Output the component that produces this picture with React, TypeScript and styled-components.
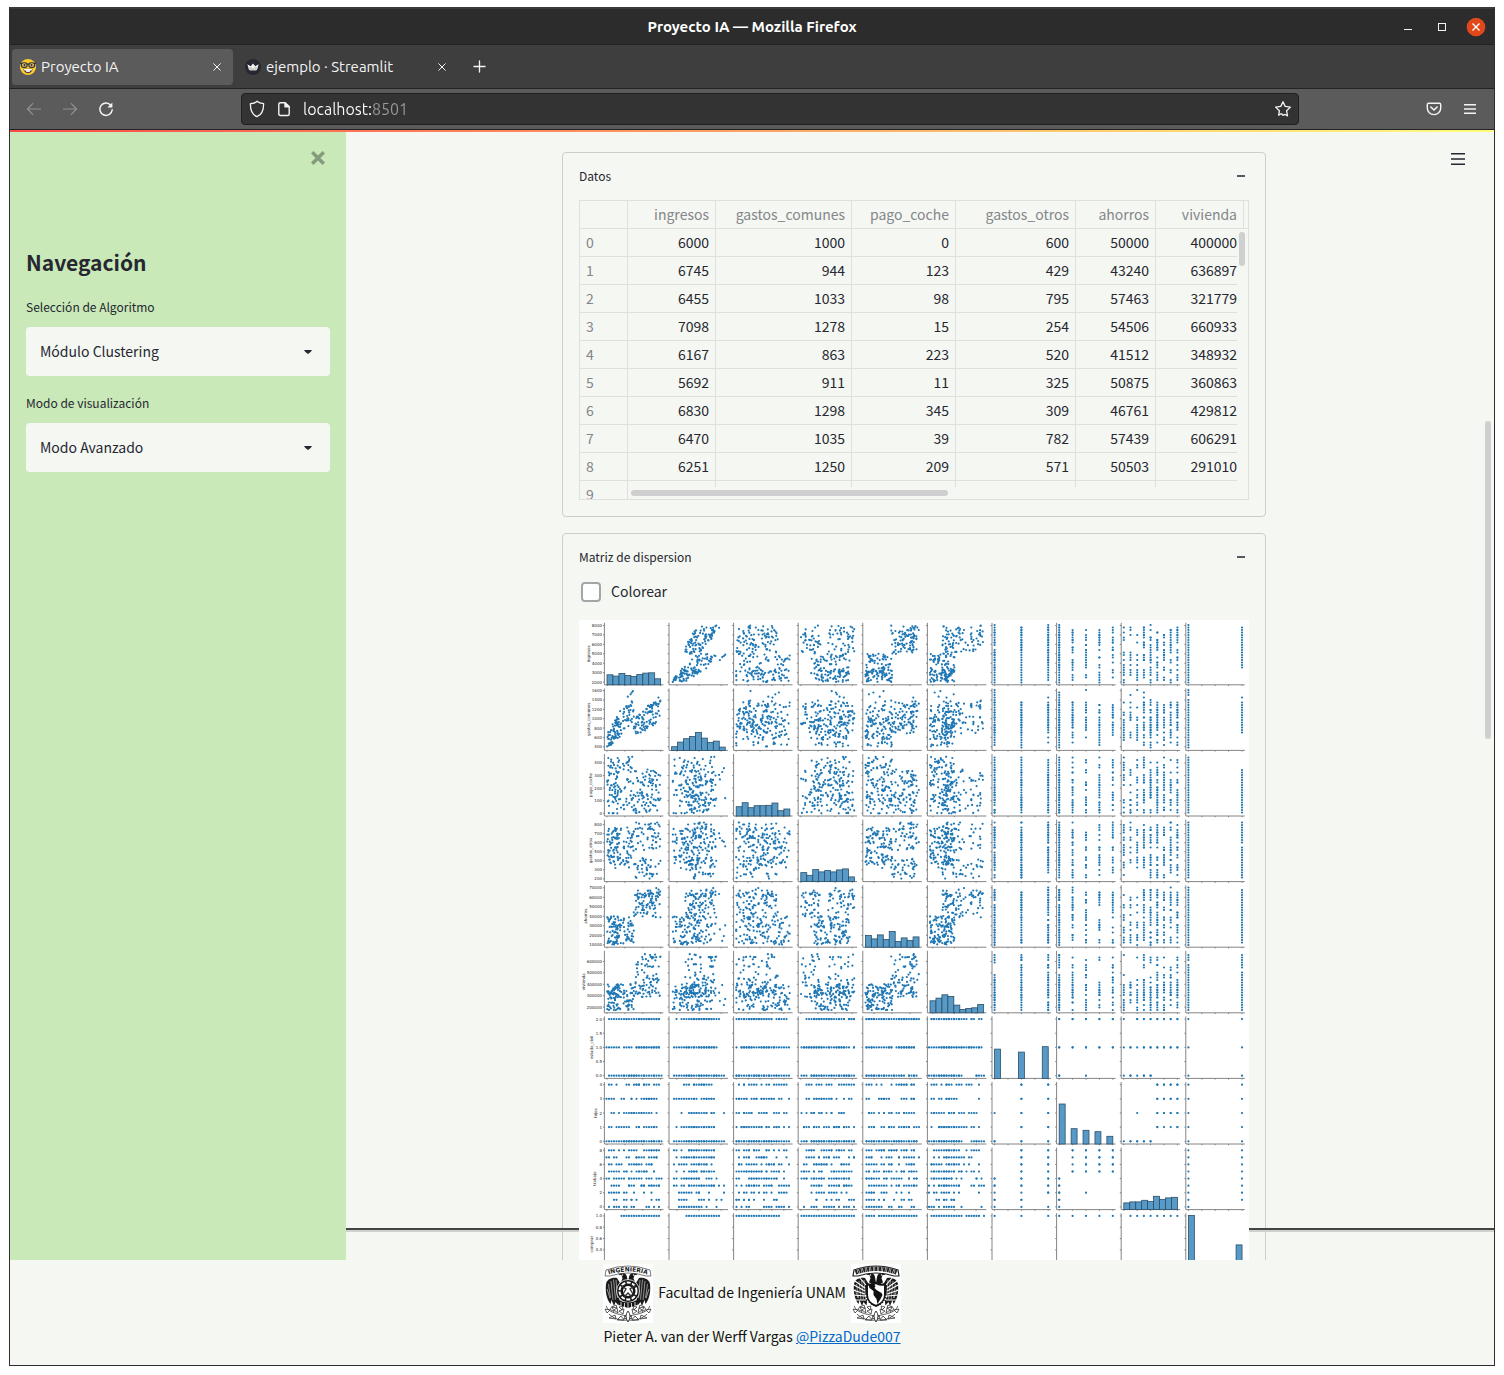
import React, { useMemo, useState } from "react";
import styled, { createGlobalStyle, css } from "styled-components";

const pageFont = `"Source Sans Pro", "Noto Sans CJK JP", "Noto Sans", sans-serif`;
const chromeFont = `Ubuntu, "Noto Sans", sans-serif`;
const ink = "#262730";
const paper = "#f5f7f2";
const line = "#dde0dc";

const GlobalStyle = createGlobalStyle`
  *, *::before, *::after { box-sizing: border-box; }
  body { margin: 0; background: #fff; font-family: ${pageFont}; color: ${ink}; }
  button, input, select { font: inherit; color: inherit; margin: 0; }
  button { padding: 0; border: 0; background: none; cursor: pointer; }
  svg { display: block; flex: none; }
`;

/* ---------- window ---------- */

const Desktop = styled.div`
  display: flex;
  height: 100vh;
  padding: 7px 9px 9px;
`;

const Window = styled.div`
  display: flex;
  flex-direction: column;
  flex: 1;
  min-width: 0;
  border: 1px solid #2d2d2d;
  border-top: 2px solid #3a3a3a;
  background: ${paper};
`;

const TitleBar = styled.header`
  display: grid;
  grid-template-columns: 1fr auto 1fr;
  align-items: center;
  height: 36px;
  flex: none;
  padding: 0 8px;
  background: #2c2c2c;
  border-bottom: 1px solid #232323;
  font-family: ${chromeFont};
`;

const WindowTitle = styled.h1`
  grid-column: 2;
  margin: 0;
  font-size: 15px;
  line-height: 20px;
  font-weight: 700;
  color: #fff;
`;

const WindowControls = styled.div`
  display: flex;
  justify-content: flex-end;
  gap: 14px;
`;

const IconButton = styled.button<{ $size: number; $color?: string }>`
  display: grid;
  place-items: center;
  width: ${(p) => p.$size}px;
  height: ${(p) => p.$size}px;
  flex: none;
  color: ${(p) => p.$color ?? "#f4f4f4"};
`;

const TabStrip = styled.nav`
  display: flex;
  align-items: center;
  gap: 4px;
  height: 44px;
  flex: none;
  padding: 0 2px;
  background: #3e3e3e;
  border-bottom: 1px solid #232323;
  font-family: ${chromeFont};
`;

const Tab = styled.div<{ $active?: boolean }>`
  display: flex;
  align-items: center;
  width: 221px;
  height: 36px;
  padding: 0 8px;
  border-radius: 4px;
  background: ${(p) => (p.$active ? "#5b5b5b" : "transparent")};
`;

const TabLabel = styled.button`
  display: flex;
  align-items: center;
  gap: 5px;
  flex: 1;
  text-align: left;
  font-size: 15px;
  line-height: 20px;
  color: #f4f4f4;
`;

const ToolBar = styled.div`
  display: flex;
  align-items: center;
  height: 41px;
  flex: none;
  padding: 0 16px;
  background: #5b5b5b;
  border-bottom: 1px solid #232323;
  font-family: ${chromeFont};
`;

const ToolGroup = styled.div<{ $end?: boolean }>`
  display: flex;
  gap: 20px;
  width: ${(p) => (p.$end ? "179px" : "215px")};
  flex: none;
  justify-content: ${(p) => (p.$end ? "flex-end" : "flex-start")};
`;

const AddressBar = styled.form`
  display: flex;
  align-items: center;
  gap: 13px;
  flex: 1;
  height: 32px;
  padding: 0 6px 0 7px;
  border: 1px solid #202020;
  border-radius: 4px;
  background: #333;
  color: #f4f4f4;
`;

const AddressInput = styled.input`
  flex: 1;
  min-width: 0;
  padding: 0;
  border: 0;
  outline: 0;
  font-size: 16px;
  line-height: 24px;
  color: #fff;
  -webkit-text-fill-color: transparent;
  background: linear-gradient(90deg, #fff 69px, #9a9a9a 69px);
  -webkit-background-clip: text;
  background-clip: text;
`;

/* ---------- app ---------- */

const Decoration = styled.div`
  height: 2px;
  flex: none;
  background: linear-gradient(90deg, #ff4b4b, #fffd80);
`;

const Body = styled.div`
  display: flex;
  flex: 1;
  min-height: 0;
`;

const Sidebar = styled.aside`
  display: flex;
  flex-direction: column;
  width: 336px;
  flex: none;
  padding: 14px 16px;
  background: #c9e9b8;
`;

const SidebarTop = styled.div`
  display: flex;
  justify-content: flex-end;
  height: 98px;
`;

const SidebarTitle = styled.h2`
  margin: 0 0 16px;
  font-size: 21px;
  line-height: 36px;
  font-weight: 700;
`;

const Field = styled.div`
  display: flex;
  flex-direction: column;
  gap: 9px;
  margin-bottom: 16px;
`;

const FieldLabel = styled.label`
  font-size: 12px;
  line-height: 22px;
`;

const SelectBox = styled.div`
  display: grid;
  align-items: center;
  & > * { grid-area: 1 / 1; }
  & > svg { justify-self: end; margin-right: 18px; pointer-events: none; }
`;

const Select = styled.select`
  appearance: none;
  width: 100%;
  height: 49px;
  padding: 0 40px 2px 14px;
  border: 0;
  border-radius: 4px;
  background: ${paper};
  font-size: 14px;
`;

const Main = styled.main`
  position: relative;
  display: flex;
  flex: 1;
  min-width: 0;
  overflow: hidden;
  padding: 20px 12px 0 0;
`;

const FloatingMenu = styled.div`
  position: absolute;
  top: 16px;
  right: 25px;
`;

const FooterRule = styled.div`
  position: absolute;
  left: 0;
  right: 0;
  bottom: 28px;
  height: 4px;
  background: #cfd1cd;
  border-top: 2px solid #444;
`;

const PageThumb = styled.div`
  position: absolute;
  top: 289px;
  right: 3px;
  width: 6px;
  height: 318px;
  border-radius: 3px;
  background: #cfcfcf;
`;

const Column = styled.div`
  display: flex;
  flex-direction: column;
  gap: 16px;
  width: 100%;
  max-width: 704px;
  margin: 0 auto;
`;

const Card = styled.section`
  flex: none;
  padding: 0 16px 16px;
  border: 1px solid #cbcecb;
  border-radius: 4px;
`;

const CardHeader = styled.button`
  display: flex;
  align-items: center;
  justify-content: space-between;
  width: 100%;
  height: 47px;
  padding: 0 4px 2px 0;
  font-size: 12px;
  line-height: 20px;
`;

const Dash = styled.span`
  width: 8px;
  height: 2px;
  background: #555860;
`;

const Grid = styled.div`
  position: relative;
  height: 300px;
  overflow: hidden;
  border: 1px solid ${line};
`;

const Table = styled.table`
  width: 100%;
  table-layout: fixed;
  border-collapse: separate;
  border-spacing: 0;
  font-size: 14px;
  line-height: 20px;
`;

const cell = css`
  height: 28px;
  padding: 0 6px 2px;
  border: solid ${line};
  border-width: 0 1px 1px 0;
  text-align: right;
  font-weight: 400;
  white-space: nowrap;
`;

const HeadCell = styled.th<{ $last?: boolean }>`
  ${cell}
  color: #83868a;
  ${(p) => p.$last && "padding: 0; border-right: 0;"}
`;

const IndexCell = styled.th`
  ${cell}
  text-align: left;
  color: #83868a;
`;

const DataCell = styled.td<{ $last?: boolean }>`
  ${cell}
  ${(p) => p.$last && "padding-right: 0; border-right: 0;"}
`;

const StubCell = styled.td<{ $last?: boolean }>`
  ${(p) => !p.$last && `background: linear-gradient(${line}, ${line}) right top / 1px 6px no-repeat;`}
`;

const GridThumb = styled.div<{ $vertical?: boolean }>`
  position: absolute;
  border-radius: 3px;
  background: #cfcfcf;
  ${(p) =>
    p.$vertical
      ? "top: 31px; right: 3px; width: 6px; height: 34px;"
      : "bottom: 3px; left: 51px; width: 317px; height: 6px;"}
`;

const CheckLabel = styled.label`
  display: flex;
  align-items: center;
  gap: 10px;
  height: 22px;
  margin-bottom: 17px;
  padding-left: 2px;
  font-size: 14px;
  line-height: 20px;
`;

const CheckText = styled.span`
  padding-bottom: 2px;
`;

const Check = styled.input`
  appearance: none;
  width: 20px;
  height: 20px;
  border: 2px solid #a3a6a6;
  border-radius: 4px;
  background: #fff;
  &:checked { background: #1f77b4; }
`;

const Figure = styled.figure`
  position: relative;
  margin: 0;
  background: #fff;
`;

const Footer = styled.footer`
  display: flex;
  flex-direction: column;
  align-items: center;
  gap: 1px;
  flex: none;
  padding: 4px 0 17px;
  font-size: 14px;
  line-height: 24px;
  color: #111;
`;

const FooterLine = styled.div`
  display: flex;
  align-items: center;
  gap: 5px;
`;

const FooterText = styled.span`
  padding-bottom: 3px;
`;

const Link = styled.a`
  color: #0068c9;
`;

/* ---------- data table ---------- */

const columns = ["ingresos", "gastos_comunes", "pago_coche", "gastos_otros", "ahorros", "vivienda"];
const colWidths = [48, 88, 136, 104, 120, 80, 81, 7];
const rows = [
  [6000, 1000, 0, 600, 50000, 400000],
  [6745, 944, 123, 429, 43240, 636897],
  [6455, 1033, 98, 795, 57463, 321779],
  [7098, 1278, 15, 254, 54506, 660933],
  [6167, 863, 223, 520, 41512, 348932],
  [5692, 911, 11, 325, 50875, 360863],
  [6830, 1298, 345, 309, 46761, 429812],
  [6470, 1035, 39, 782, 57439, 606291],
  [6251, 1250, 209, 571, 50503, 291010],
];

function DataTable() {
  return (
    <Grid>
      <Table>
        <colgroup>
          {colWidths.map((w, i) => <col key={i} style={{ width: w }} />)}
          <col />
        </colgroup>
        <thead>
          <tr>
            <HeadCell />
            {columns.map((c, i) => <HeadCell key={c} scope="col" colSpan={i === 5 ? 2 : 1}>{c}</HeadCell>)}
            <HeadCell $last />
          </tr>
        </thead>
        <tbody>
          {rows.map((r, i) => (
            <tr key={i}>
              <IndexCell scope="row">{i}</IndexCell>
              {r.map((v, j) => <DataCell key={j} $last={j === 5}>{v}</DataCell>)}
            </tr>
          ))}
          <tr>
            <IndexCell scope="row">9</IndexCell>
            {columns.map((c, j) => <StubCell key={c} $last={j === 5} />)}
          </tr>
        </tbody>
      </Table>
      <GridThumb $vertical />
      <GridThumb />
    </Grid>
  );
}

/* ---------- pair plot ---------- */

type Axis = { name: string; min: number; max: number; ticks: number[]; xTicks: number[]; labelX: number; digits?: number };

const steps = (a: number, b: number, s: number) => {
  const out: number[] = [];
  for (let v = a; v <= b + s / 100; v += s) out.push(v);
  return out;
};

const axes: Axis[] = [
  { name: "ingresos", min: 2000, max: 8000, ticks: steps(2000, 8000, 1000), xTicks: steps(2000, 8000, 2000), labelX: 10 },
  { name: "gastos_comunes", min: 380, max: 1590, ticks: steps(400, 1600, 200), xTicks: [500, 1000, 1500], labelX: 10 },
  { name: "pago_coche", min: 0, max: 450, ticks: steps(0, 400, 100), xTicks: steps(0, 400, 100), labelX: 12 },
  { name: "gastos_otros", min: 200, max: 825, ticks: steps(200, 800, 100), xTicks: steps(200, 800, 200), labelX: 12 },
  { name: "ahorros", min: 10400, max: 69900, ticks: steps(10000, 70000, 10000), xTicks: steps(20000, 60000, 20000), labelX: 7 },
  { name: "vivienda", min: 174000, max: 670000, ticks: steps(200000, 600000, 100000), xTicks: steps(200000, 600000, 200000), labelX: 5 },
  { name: "estado_civil", min: 0, max: 2, ticks: steps(0, 2, 0.5), xTicks: steps(0, 2, 0.5), labelX: 13, digits: 1 },
  { name: "hijos", min: 0, max: 4, ticks: steps(0, 4, 1), xTicks: steps(0, 4, 1), labelX: 17 },
  { name: "trabajo", min: 0, max: 8, ticks: steps(0, 8, 2), xTicks: steps(0, 8, 2), labelX: 16 },
  { name: "comprar", min: 0, max: 1, ticks: steps(0.2, 1, 0.2), xTicks: steps(0, 1, 0.25), labelX: 13, digits: 1 },
];

/* bar heights of the diagonal histograms; zeros are empty bins */
const bars: number[][] = [
  [10, 8.7, 11.3, 9.3, 8.3, 10.3, 11.7, 12, 6],
  [3.7, 8.3, 11.7, 14, 18, 12.3, 8, 9.3, 3.3],
  [9.3, 13.3, 8.3, 10.3, 10.3, 10.7, 13, 5.3, 7],
  [9, 6.3, 12, 9.7, 11, 9.7, 11.7, 12.7, 4.7],
  [11.7, 8.3, 12.3, 7.7, 15.7, 5.7, 9.3, 6.7, 10.3],
  [12, 14.7, 18, 16.3, 7.7, 3.3, 4.3, 5, 8.3],
  [29.3, 0, 0, 0, 26.3, 0, 0, 0, 31.7],
  [40, 0, 15.3, 0, 13.7, 0, 12.3, 0, 7.7],
  [6.7, 7.7, 7.7, 9.3, 8, 13.3, 10, 11.7, 12.3],
  [59.7, 0, 0, 0, 0, 0, 0, 0, 30.3],
];

function makeSamples(): number[][] {
  let seed = 20211;
  const rnd = () => {
    seed = (seed * 1664525 + 1013904223) % 4294967296;
    return seed / 4294967296;
  };
  const between = (a: number, b: number) => a + (b - a) * rnd();
  const out: number[][] = [
    [4900, 1590, 120, 560, 30500, 270000, 0, 2, 2, 0],
    [7950, 1370, 300, 640, 66000, 640000, 2, 0, 4, 0],
    [3200, 900, 440, 700, 22000, 380000, 1, 0, 0, 0],
  ];
  for (let i = 0; i < 200; i++) {
    const low = rnd() < 0.5;
    const income = low ? between(2000, 5000) : between(5000, 8000);
    const common = Math.min(1560, Math.max(380, low ? income * between(0.18, 0.34) : income * between(0.12, 0.195)));
    const car = low ? between(0, 450) : between(0, 350);
    const other = low ? between(320, 770) : rnd() < 0.45 ? between(200, 430) : between(500, 825);
    const savings = low ? between(10400, 40000) : between(38000, 69900);
    const home = low ? between(174000, 405000) : rnd() < 0.6 ? between(280000, 460000) : between(460000, 670000);
    const job = Math.floor(Math.pow(rnd(), 0.85) * 9);
    const kids = job < 5 ? (job === 2 && rnd() < 0.1 ? 2 : 0) : 1 + Math.floor(Math.pow(rnd(), 1.3) * 4);
    const civil = job < 5 ? (rnd() < 0.65 ? 0 : 1 + Math.floor(rnd() * 2)) : rnd() < 0.42 ? 1 : 2;
    const buys = income > 3500 && car < 350 && job > 0 && rnd() < 0.55 ? 1 : 0;
    out.push([income, common, car, other, savings, home, civil, kids, job, buys]);
  }
  return out;
}

const PITCH_X = 64.6;
const PITCH_Y = 65.6;
const left = (c: number) => 25.4 + PITCH_X * c;
const bottom = (r: number) => 64.8 + PITCH_Y * r;
const px = (c: number, v: number) => left(c) + 2.6 + (53.6 * (v - axes[c].min)) / (axes[c].max - axes[c].min);
const py = (r: number, v: number) => bottom(r) - 2.7 - (56.6 * (v - axes[r].min)) / (axes[r].max - axes[r].min);
const DOT_STEP = 2.5;

function PairPlot({ colored }: { colored: boolean }) {
  const samples = useMemo(makeSamples, []);
  const panels = useMemo(() => {
    const list: { key: string; d: [string, string] }[] = [];
    axes.forEach((_, r) =>
      axes.forEach((__, c) => {
        if (r === c) return;
        const d: [string, string] = ["", ""];
        samples.forEach((s) => {
          let x = px(c, s[c]);
          let y = py(r, s[r]);
          if (c > 5 && r < 6) y = Math.round(y / DOT_STEP) * DOT_STEP;
          if (r > 5 && c < 6) x = Math.round(x / DOT_STEP) * DOT_STEP;
          d[s[9]] += `M${x.toFixed(1)} ${y.toFixed(1)}h.01`;
        });
        list.push({ key: `${r}-${c}`, d });
      })
    );
    return list;
  }, [samples]);

  return (
    <svg viewBox="0 0 670 670" width="100%" role="img" aria-label="Matriz de dispersion">
      <g stroke="#777" strokeWidth="0.9" fill="none">
        {axes.map((_, r) =>
          axes.map((a, c) => (
            <path
              key={`${r}-${c}`}
              d={
                `M${left(c)} ${bottom(r) - 62}V${bottom(r)}H${left(c) + 59}` +
                axes[r].ticks.map((t) => `M${left(c)} ${py(r, t)}h-1.4`).join("") +
                a.xTicks.map((t) => `M${px(c, t)} ${bottom(r)}v1.2`).join("")
              }
            />
          ))
        )}
      </g>
      <g strokeWidth="2.2" strokeLinecap="round" fill="none">
        {panels.map((p) => (
          <React.Fragment key={p.key}>
            <path d={p.d[0]} stroke="#1f77b4" />
            <path d={p.d[1]} stroke={colored ? "#ff7f0e" : "#1f77b4"} />
          </React.Fragment>
        ))}
      </g>
      <g fill="#579ac7" stroke="#2b4f68" strokeWidth="0.8">
        {bars.map((hs, i) =>
          hs.map((h, k) =>
            h > 0 ? <rect key={`${i}-${k}`} x={left(i) + 2.6 + k * 5.96} y={bottom(i) - h} width="5.96" height={h} /> : null
          )
        )}
      </g>
      <g fill="#222" fontFamily="DejaVu Sans, sans-serif" fontSize="4">
        {axes.map((a, r) => (
          <React.Fragment key={a.name}>
            {a.ticks.map((t) => (
              <text key={t} x="23" y={py(r, t) + 1.5} textAnchor="end">{t.toFixed(a.digits ?? 0)}</text>
            ))}
            <text transform={`translate(${a.labelX + 1} ${bottom(r) - 31}) rotate(-90)`} textAnchor="middle">{a.name}</text>
          </React.Fragment>
        ))}
      </g>
    </svg>
  );
}

/* ---------- icons ---------- */

const stroke = { fill: "none", stroke: "currentColor", strokeLinecap: "round", strokeLinejoin: "round" } as const;

const CloseIcon = ({ size = 8, width = 1.2, cap = "round" }: { size?: number; width?: number; cap?: "round" | "butt" }) => (
  <svg width={size} height={size} viewBox="0 0 8 8" {...stroke} strokeLinecap={cap} strokeWidth={width}><path d="M.7.7l6.600 6.600M7.300.7L.7 7.300" /></svg>
);

const MenuIcon = ({ width, height, weight }: { width: number; height: number; weight: number }) => (
  <svg width={width} height={height} fill="currentColor">
    {[0, (height - weight) / 2, height - weight].map((y) => <rect key={y} y={y} width={width} height={weight} />)}
  </svg>
);

const NerdIcon = () => (
  <svg width="16" height="16" viewBox="0 0 16 16">
    <circle cx="8" cy="8" r="8" fill="#fcc92f" />
    <path d="M3.4 9.8h9.2c-.3 2.8-2.2 4.5-4.6 4.5s-4.300-1.700-4.600-4.500z" fill="#5d4037" />
    <path d="M4 10h8l-.4 1.400H4.400z" fill="#fff" />
    <path d="M6.300 11h1.600v2H6.300zM8.100 11h1.600v2H8.100z" fill="#fff" />
    <g fill="#d9c27c" stroke="#2d2f33" strokeWidth="1.100">
      <rect x="1.400" y="3.700" width="5.700" height="4.700" rx="2.200" />
      <rect x="8.900" y="3.700" width="5.700" height="4.700" rx="2.200" />
    </g>
    <path d="M0 4.400h1.800M14.200 4.400H16M6.900 5.200q1.100-.8 2.200 0" stroke="#2d2f33" strokeWidth="1.200" fill="none" />
    <circle cx="4.500" cy="6.100" r="1" fill="#3b2a20" />
    <circle cx="11.500" cy="6.100" r="1" fill="#3b2a20" />
  </svg>
);

const CrownIcon = () => (
  <svg width="16" height="16" viewBox="0 0 16 16">
    <circle cx="8" cy="8" r="8" fill="#262730" />
    <path d="M2.300 5.200l3.400 2L8 4.400l2.300 2.800 3.400-2-1.700 5.300q-.2.700-1 .7H5q-.8 0-1-.7z" fill="#f4f4f4" />
    <path d="M3.500 9l2.200-1.800L8 9.200l2.300-2L12.500 9l-.5 1.500q-.2.700-1 .7H5q-.8 0-1-.7z" fill="#cfcfcf" />
  </svg>
);

const ArrowIcon = ({ flip }: { flip?: boolean }) => (
  <svg width="16" height="16" viewBox="0 0 16 16" {...stroke} strokeWidth="1.200">
    <path d={flip ? "M1.500 8h13M9.300 2.700L14.500 8l-5.200 5.300" : "M14.500 8h-13M6.700 2.700L1.500 8l5.200 5.300"} />
  </svg>
);

const ReloadIcon = () => (
  <svg width="16" height="16" viewBox="0 0 16 16" {...stroke} strokeWidth="1.500">
    <path d="M12.800 4.300A6.200 6.200 0 1 0 14.200 8.800" />
    <path d="M14.400 1.600v5H9.400z" fill="currentColor" stroke="none" />
  </svg>
);

const ShieldIcon = () => (
  <svg width="16" height="18" viewBox="0 0 16 18" {...stroke} strokeWidth="1.300">
    <path d="M8 1.300C6.400 2.900 4 3.600 1.400 3.700 1.300 9.700 3.300 14.700 8 16.700c4.700-2 6.700-7 6.600-13C12 3.600 9.600 2.900 8 1.300z" />
  </svg>
);

const PageIcon = () => (
  <svg width="12" height="16" viewBox="0 0 12 16" {...stroke} strokeWidth="1.400">
    <path d="M2.300 1.700h4.900L11.200 5.700v7.300q0 1.500-1.500 1.500H2.300q-1.500 0-1.500-1.500V3.200q0-1.500 1.500-1.500z" />
    <path d="M7 1.700v4h4.200z" fill="currentColor" />
  </svg>
);

const StarIcon = () => (
  <svg width="18" height="18" viewBox="0 0 18 18" {...stroke} strokeWidth="1.300">
    <path d="M9 1.700l2.200 4.700 5.200.7-3.800 3.600.9 5.200-2.300-1.400q-.5-.2-.8.200L9 15.300l-1.200-1.300q-.4-.4-.8-.2l-2.300 1.400.7-4.500L1.600 7.100l5.200-.7z" />
  </svg>
);

const PocketIcon = () => (
  <svg width="16" height="14" viewBox="0 0 16 14" {...stroke} strokeWidth="1.400">
    <path d="M2.600 1.300h10.800q1.300 0 1.300 1.300v3.700a6.700 6.300 0 0 1-13.400 0V2.600q0-1.300 1.300-1.300z" />
    <path d="M4.900 5L8 8l3.100-3" strokeWidth="1.600" />
  </svg>
);

const Caret = () => (
  <svg width="8" height="4" viewBox="0 0 8 4"><path d="M0 0h8q-1 2.200-4 4-3-1.800-4-4z" fill={ink} /></svg>
);

const BirdSide = () => (
  <g>
    <path d="M24 13c-1-4-4-5-7-3.800l-1.500 1.600 3 .2 1 3.300-1.500 4L22 21l3-2z" fill="#161616" />
    <circle cx="19.500" cy="11" r=".7" fill="#fff" />
    <path d="M14 14C9 13 4 15 3 20c-.8 7 .3 15 4.500 20l1-4 2.500 6 1.500-4 3 3.500 3-20z" fill="#1d1d1d" />
    <path d="M5.500 20l2 14M8 17l2 19M10.500 15.500l2 20M13 16l1.500 18M4 25l3 9" stroke="#ddd" strokeWidth=".6" fill="none" />
    <path d="M25 54c-4-4-9-3-13-5-4-1-7-3-9-7M24 56c-6 1-13-1-18-6M7 46l-5-1 2 4zM11 47.500l-2-5-2 3zM15 49l-1-5-3 2zM12 51l-6 3 7 1zM18 52l-4 4 7 0zM20 50l1-5-5 2zM9 43l4-2 1 3zM22 51l-1 4 3-1zM16 43l4-1-1 4z" fill="#fff" stroke="#333" strokeWidth=".8" />
  </g>
);

function Crest({ kind }: { kind: "ingenieria" | "unam" }) {
  const unam = kind === "unam";
  return (
    <svg width="50" height="59" viewBox="0 0 50 59" role="img" aria-label={unam ? "UNAM" : "Ingeniería"}>
      <rect width="50" height="59" fill="#fff" />
      <BirdSide />
      <g transform="matrix(-1 0 0 1 50 0)"><BirdSide /></g>
      {unam ? (
        <g>
          <path d="M1 15l13 9M1 20l13 7M2 26l12 4M2 31l12 1M49 15l-13 9M49 20l-13 7M48 26l-12 4M48 31l-12 1M4 36l11 0M46 36l-11 0M8 13l7 8M42 13l-7 8" stroke="#fff" strokeWidth="1.100" />
          <path d="M16 20q5 2 9-1 4 3 9 1v11q0 8-9 11-9-3-9-11z" fill="#fff" stroke="#161616" strokeWidth="2" />
          <path d="M14.500 31q1 9 10.500 13 9.500-4 10.500-13" fill="none" stroke="#fff" strokeWidth="1.500" strokeDasharray="1.500 1.500" />
          <path d="M17.500 20.500l5-.5 2 2-1 2 2 2 5 3 1 2-2 4-3 5-1-5-3-4 0-4-4-3z" fill="#111" />
        </g>
      ) : (
        <g>
          <circle cx="25" cy="27" r="11.500" fill="#161616" stroke="#fff" strokeWidth=".8" />
          <circle cx="25" cy="27" r="8.500" fill="none" stroke="#fff" strokeWidth="2" strokeDasharray="4 1.500" />
          <circle cx="25" cy="27" r="5" fill="#fff" />
          <path d="M17 21l6 4-3 5M33 21l-6 4 3 5M21 33l4-4 4 4" stroke="#333" strokeWidth="1.400" fill="none" />
          <path d="M14 35q11 7 22 0l-2 6-9 3-9-3z" fill="#161616" />
          <path d="M18 38v4M21.500 39v4M25 39v5M28.500 39v4M32 38v4" stroke="#fff" strokeWidth=".8" />
        </g>
      )}
      <path d="M3 6Q25-2 47 6l1 6-5 0Q25 6 7 12l-5 0z" fill="#fff" stroke="#222" strokeWidth={unam ? 1.2 : 0.6} />
      {unam ? (
        <path d="M4.500 8.500Q25 1 45.500 8.500" stroke="#222" strokeWidth="4.500" strokeDasharray="2 .5 1 .5" fill="none" />
      ) : (
        <>
          <path id="crest-arc" d="M3 11.500Q25 3.500 47 11.500" fill="none" />
          <text fontFamily="DejaVu Sans, sans-serif" fontSize="6" fontWeight="700" fill="#222">
            <textPath href="#crest-arc" startOffset="50%" textAnchor="middle">INGENIERIA</textPath>
          </text>
        </>
      )}
      <path d="M25 47q-4 5 0 11 4-6 0-11z" fill="#fff" stroke="#222" strokeWidth=".9" />
    </svg>
  );
}

/* ---------- page ---------- */

function SidebarSelect({ id, label, options }: { id: string; label: string; options: string[] }) {
  return (
    <Field>
      <FieldLabel htmlFor={id}>{label}</FieldLabel>
      <SelectBox>
        <Select id={id}>{options.map((o) => <option key={o}>{o}</option>)}</Select>
        <Caret />
      </SelectBox>
    </Field>
  );
}

function Expander({ title, children }: { title: string; children: React.ReactNode }) {
  const [open, setOpen] = useState(true);
  return (
    <Card>
      <CardHeader aria-expanded={open} onClick={() => setOpen(!open)}>
        {title}
        <Dash />
      </CardHeader>
      {open && children}
    </Card>
  );
}

export default function App() {
  const [colored, setColored] = useState(false);
  return (
    <Desktop>
      <GlobalStyle />
      <Window>
        <TitleBar>
          <WindowTitle>Proyecto IA — Mozilla Firefox</WindowTitle>
          <WindowControls>
            <IconButton $size={20} aria-label="Minimizar">
              <svg width="8" height="8"><path d="M0 6.500h8" stroke="currentColor" /></svg>
            </IconButton>
            <IconButton $size={20} aria-label="Maximizar">
              <svg width="8" height="8"><rect x=".5" y=".5" width="7" height="7" fill="none" stroke="currentColor" /></svg>
            </IconButton>
            <IconButton $size={20} aria-label="Cerrar">
              <svg width="20" height="20" viewBox="0 0 20 20">
                <circle cx="10" cy="10" r="9.300" fill="#e2491a" />
                <path d="M6.500 6.500l7 7M13.500 6.500l-7 7" stroke="#fff" strokeWidth="1.400" />
              </svg>
            </IconButton>
          </WindowControls>
        </TitleBar>
        <TabStrip>
          <Tab $active>
            <TabLabel><NerdIcon />Proyecto IA</TabLabel>
            <IconButton $size={16} aria-label="Cerrar pestaña"><CloseIcon width={1} /></IconButton>
          </Tab>
          <Tab>
            <TabLabel><CrownIcon />ejemplo · Streamlit</TabLabel>
            <IconButton $size={16} aria-label="Cerrar pestaña"><CloseIcon width={1} /></IconButton>
          </Tab>
          <IconButton $size={34} aria-label="Nueva pestaña">
            <svg width="13" height="13"><path d="M6.500 1v11M1 6.500h11" stroke="currentColor" strokeWidth="1.300" strokeLinecap="round" /></svg>
          </IconButton>
        </TabStrip>
        <ToolBar>
          <ToolGroup>
            <IconButton $size={16} $color="#919191" aria-label="Atrás"><ArrowIcon /></IconButton>
            <IconButton $size={16} $color="#919191" aria-label="Adelante"><ArrowIcon flip /></IconButton>
            <IconButton $size={16} aria-label="Recargar"><ReloadIcon /></IconButton>
          </ToolGroup>
          <AddressBar onSubmit={(e) => e.preventDefault()}>
            <ShieldIcon />
            <PageIcon />
            <AddressInput type="text" aria-label="Dirección" defaultValue="localhost:8501" />
            <IconButton $size={18} type="button" aria-label="Marcador"><StarIcon /></IconButton>
          </AddressBar>
          <ToolGroup $end>
            <IconButton $size={16} aria-label="Pocket"><PocketIcon /></IconButton>
            <IconButton $size={16} aria-label="Menú"><MenuIcon width={12} height={10} weight={1.5} /></IconButton>
          </ToolGroup>
        </ToolBar>
        <Decoration />
        <Body>
          <Sidebar>
            <SidebarTop>
              <IconButton $size={24} $color="#869b7d" aria-label="Cerrar barra lateral"><CloseIcon size={14} width={2} cap="butt" /></IconButton>
            </SidebarTop>
            <SidebarTitle>Navegación</SidebarTitle>
            <SidebarSelect id="algoritmo" label="Selección de Algoritmo" options={["Módulo Clustering"]} />
            <SidebarSelect id="modo" label="Modo de visualización" options={["Modo Avanzado"]} />
          </Sidebar>
          <Main>
            <FooterRule />
            <Column>
              <Expander title="Datos"><DataTable /></Expander>
              <Expander title="Matriz de dispersion">
                <CheckLabel>
                  <Check type="checkbox" checked={colored} onChange={(e) => setColored(e.target.checked)} />
                  <CheckText>Colorear</CheckText>
                </CheckLabel>
                <Figure><PairPlot colored={colored} /></Figure>
              </Expander>
            </Column>
            <FloatingMenu>
              <IconButton $size={22} $color={ink} aria-label="Menú de la aplicación"><MenuIcon width={14} height={12} weight={1.5} /></IconButton>
            </FloatingMenu>
            <PageThumb />
          </Main>
        </Body>
        <Footer>
          <FooterLine>
            <Crest kind="ingenieria" />
            <FooterText>Facultad de Ingeniería UNAM</FooterText>
            <Crest kind="unam" />
          </FooterLine>
          <div>Pieter A. van der Werff Vargas <Link href="#PizzaDude007">@PizzaDude007</Link></div>
        </Footer>
      </Window>
    </Desktop>
  );
}
